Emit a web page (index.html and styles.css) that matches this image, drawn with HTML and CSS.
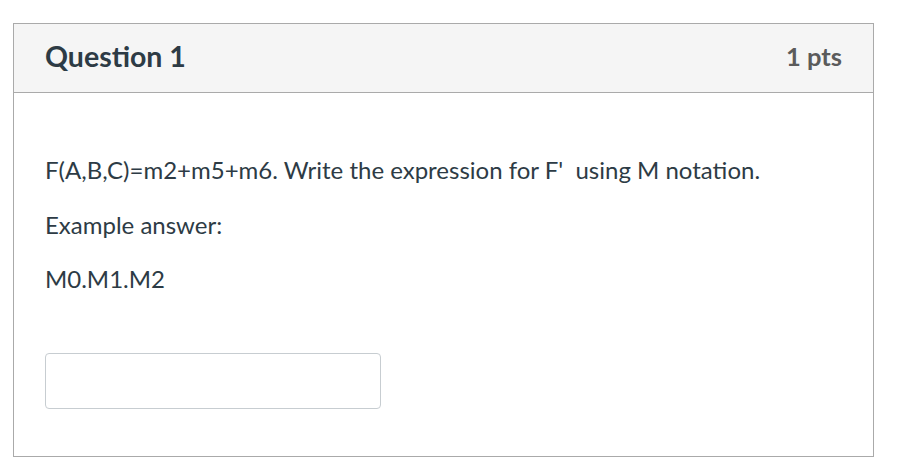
FILE: index.html
```html
<!DOCTYPE html>
<html>
<head>
<meta charset="utf-8">
<link rel="stylesheet" href="styles.css">
</head>
<body>
<div class="question">
  <div class="question-header">
    <h2 class="question-title">Question 1</h2>
    <span class="question-points">1 pts</span>
  </div>
  <div class="question-body">
    <p class="question-text">F(A,B,C)=m2+m5+m6. Write the expression for F'&nbsp; using M notation.</p>
    <p class="question-text">Example answer:</p>
    <p class="question-text">M0.M1.M2</p>
    <input class="answer-input" type="text" aria-label="answer">
  </div>
</div>
</body>
</html>
```

FILE: styles.css
```css
html, body {
  margin: 0;
  background: #ffffff;
}
body {
  padding: 23px 0 0 13px;
  font-family: Lato, "Open Sans", sans-serif;
  color: #2d3b45;
}
.question {
  width: 859px;
  border: 1px solid #aaaaaa;
  box-sizing: content-box;
}
.question-header {
  height: 69px;
  box-sizing: border-box;
  background: #f5f5f5;
  border-bottom: 1px solid #aaaaaa;
  display: flex;
  align-items: center;
  justify-content: space-between;
  padding: 0 31px 4px;
}
.question-title {
  margin: 0;
  font-size: 28.5px;
  font-weight: 700;
  color: #2d3b45;
}
.question-points {
  font-size: 25.5px;
  font-weight: 700;
  color: #5b5b5b;
}
.question-body {
  padding: 59px 31px 47px;
  display: flex;
  flex-direction: column;
  align-items: flex-start;
}
.question-text {
  margin: 0 0 18.5px;
  font-size: 24px;
  line-height: 36px;
}
.question-text:last-of-type {
  margin-bottom: 56px;
}
.answer-input {
  width: 336px;
  height: 56px;
  box-sizing: border-box;
  border: 1px solid #c7cdd1;
  border-radius: 4px;
  margin: 0;
  background: #fff;
}
```
